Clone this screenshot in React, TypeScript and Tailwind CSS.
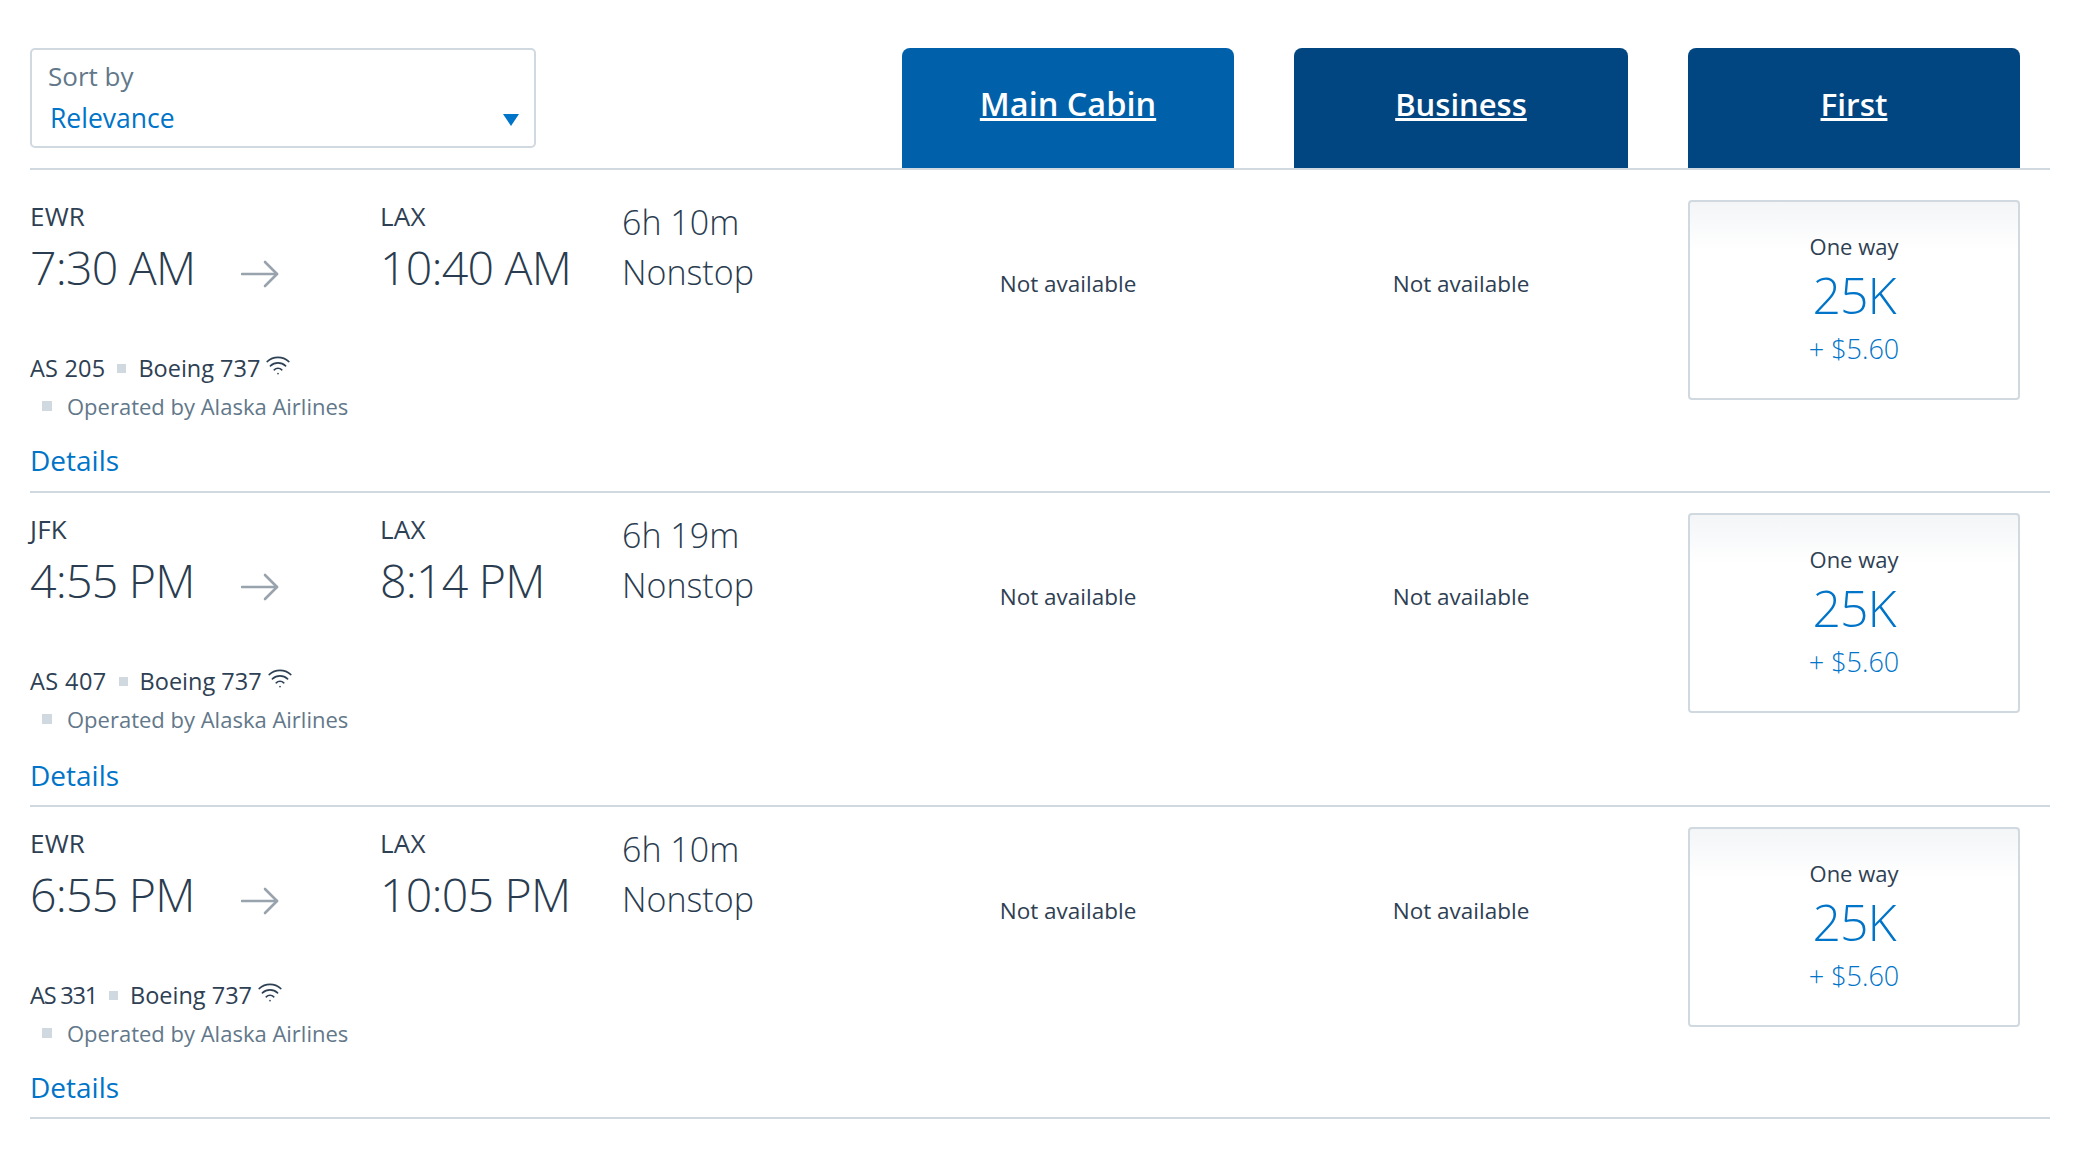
import { Wifi } from 'lucide-react';

const flights = [
  { from: 'EWR', dep: '7:30 AM', arr: '10:40 AM', dur: '6h 10m', num: 'AS 205', numClass: 'tracking-[0.2px]', row: 'h-[323px] pt-[27px]', detailsGap: 'mt-[17px]' },
  { from: 'JFK', dep: '4:55 PM', arr: '8:14 PM', dur: '6h 19m', num: 'AS 407', numClass: 'tracking-[0.4px]', row: 'h-[314px] pt-[17px]', detailsGap: 'mt-[19px]' },
  { from: 'EWR', dep: '6:55 PM', arr: '10:05 PM', dur: '6h 10m', num: 'AS 331', numClass: 'tracking-[-1.2px]', row: 'h-[312px] pt-[17px]', detailsGap: 'mt-[17px]' },
];

const FlightRow = ({ flight }: { flight: (typeof flights)[number] }) => (
  <div className={`flex items-start border-b-2 border-[#d0d9e0] ${flight.row}`}>
    <div className="flex w-[872px] flex-col">
      <div className="flex">
        <div className="w-[350px] pt-[1px]">
          <p className="text-[26px] leading-[36px] tracking-[0.2px]">{flight.from}</p>
          <div className="mt-[5px] flex items-center">
            <p className="w-[211px] text-[46.5px] leading-[56px] font-light tracking-[-0.8px] text-[#2a3c4f]">{flight.dep}</p>
            <svg className="mt-[14px] h-[28px] w-[38px] text-[#98a3ad]" viewBox="0 0 38 28" fill="none" stroke="currentColor" strokeWidth="2.6" strokeLinecap="round" strokeLinejoin="round">
              <path d="M1 14h35" />
              <path d="M24 2l12 12-12 12" />
            </svg>
          </div>
        </div>
        <div className="w-[242px] pt-[1px]">
          <p className="text-[26px] leading-[36px] tracking-[0.2px]">LAX</p>
          <p className="mt-[5px] text-[46.5px] leading-[56px] font-light tracking-[-0.8px] text-[#2a3c4f]">{flight.arr}</p>
        </div>
        <div>
          <p className="text-[34px] leading-[50px] font-light text-[#2a3c4f]">{flight.dur}</p>
          <p className="text-[34px] leading-[50px] font-light text-[#2a3c4f]">Nonstop</p>
        </div>
      </div>
      <div className="mt-[53px] flex items-center text-[23.5px] leading-[36px]">
        <span className={flight.numClass}>{flight.num}</span>
        <span className="mx-[12px] h-[9px] w-[9px] bg-[#d0d9e0]" />
        <span>Boeing 737</span>
        <Wifi className="mb-[7px] ml-[5px] h-[26px] w-[26px]" strokeWidth={1.5} />
      </div>
      <div className="mt-[2px] flex items-center pl-[12px] text-[22px] leading-[36px] text-[#62788a]">
        <span className="mr-[15px] h-[10px] w-[10px] bg-[#d0d9e0]" />
        Operated by Alaska Airlines
      </div>
      <a className={`text-[28px] leading-[38px] text-[#0074c8] ${flight.detailsGap}`}>Details</a>
    </div>
    <div className="flex w-[332px] justify-center pt-[71px]">
      <p className="text-[22.5px] leading-[32px]">Not available</p>
    </div>
    <div className="ml-[60px] flex w-[334px] justify-center pt-[71px]">
      <p className="text-[22.5px] leading-[32px]">Not available</p>
    </div>
    <div className="mt-[3px] ml-[60px] flex h-[200px] w-[332px] flex-col items-center rounded-[4px] border-2 border-[#d0d9e0] bg-gradient-to-b from-[#f3f5f7] to-white to-[25%] pt-[29px]">
      <p className="text-[22px] leading-[30px]">One way</p>
      <p className="mt-[3px] text-[50px] leading-[62px] font-light tracking-[-1px] text-[#0074c8]">25K</p>
      <p className="mt-[5px] text-[27px] leading-[36px] font-light text-[#0074c8]">+ $5.60</p>
    </div>
  </div>
);

const App = () => (
  <div className="h-[1158px] w-[2076px] bg-white pt-[48px] pr-[26px] pl-[30px] font-['Open_Sans',sans-serif] text-[#2e4053]">
    <div className="flex h-[122px] items-start border-b-2 border-[#d0d9e0]">
      <div className="relative h-[100px] w-[506px] rounded-[5px] border-2 border-[#d0d9e0] pt-[7px] pl-[16px]">
        <p className="text-[26px] leading-[38px] text-[#62788a]">Sort by</p>
        <p className="mt-[4px] pl-[2px] text-[26.5px] leading-[38px] text-[#0074c8]">Relevance</p>
        <span className="absolute top-[64px] right-[15px] h-0 w-0 border-x-[8px] border-t-[12px] border-x-transparent border-t-[#0074c8]" />
      </div>
      <div className="ml-[366px] flex h-[120px] w-[332px] justify-center rounded-t-[8px] bg-[#0060aa] pt-[31px]">
        <a className="text-[32.5px] leading-[50px] font-semibold text-white underline">Main Cabin</a>
      </div>
      <div className="ml-[60px] flex h-[120px] w-[334px] justify-center rounded-t-[8px] bg-[#014681] pt-[31px]">
        <a className="text-[31px] leading-[50px] font-semibold text-white underline">Business</a>
      </div>
      <div className="ml-[60px] flex h-[120px] w-[332px] justify-center rounded-t-[8px] bg-[#014681] pt-[31px]">
        <a className="text-[31.5px] leading-[50px] font-semibold text-white underline">First</a>
      </div>
    </div>
    {flights.map((flight) => (
      <FlightRow key={flight.num} flight={flight} />
    ))}
  </div>
);

export default App;
